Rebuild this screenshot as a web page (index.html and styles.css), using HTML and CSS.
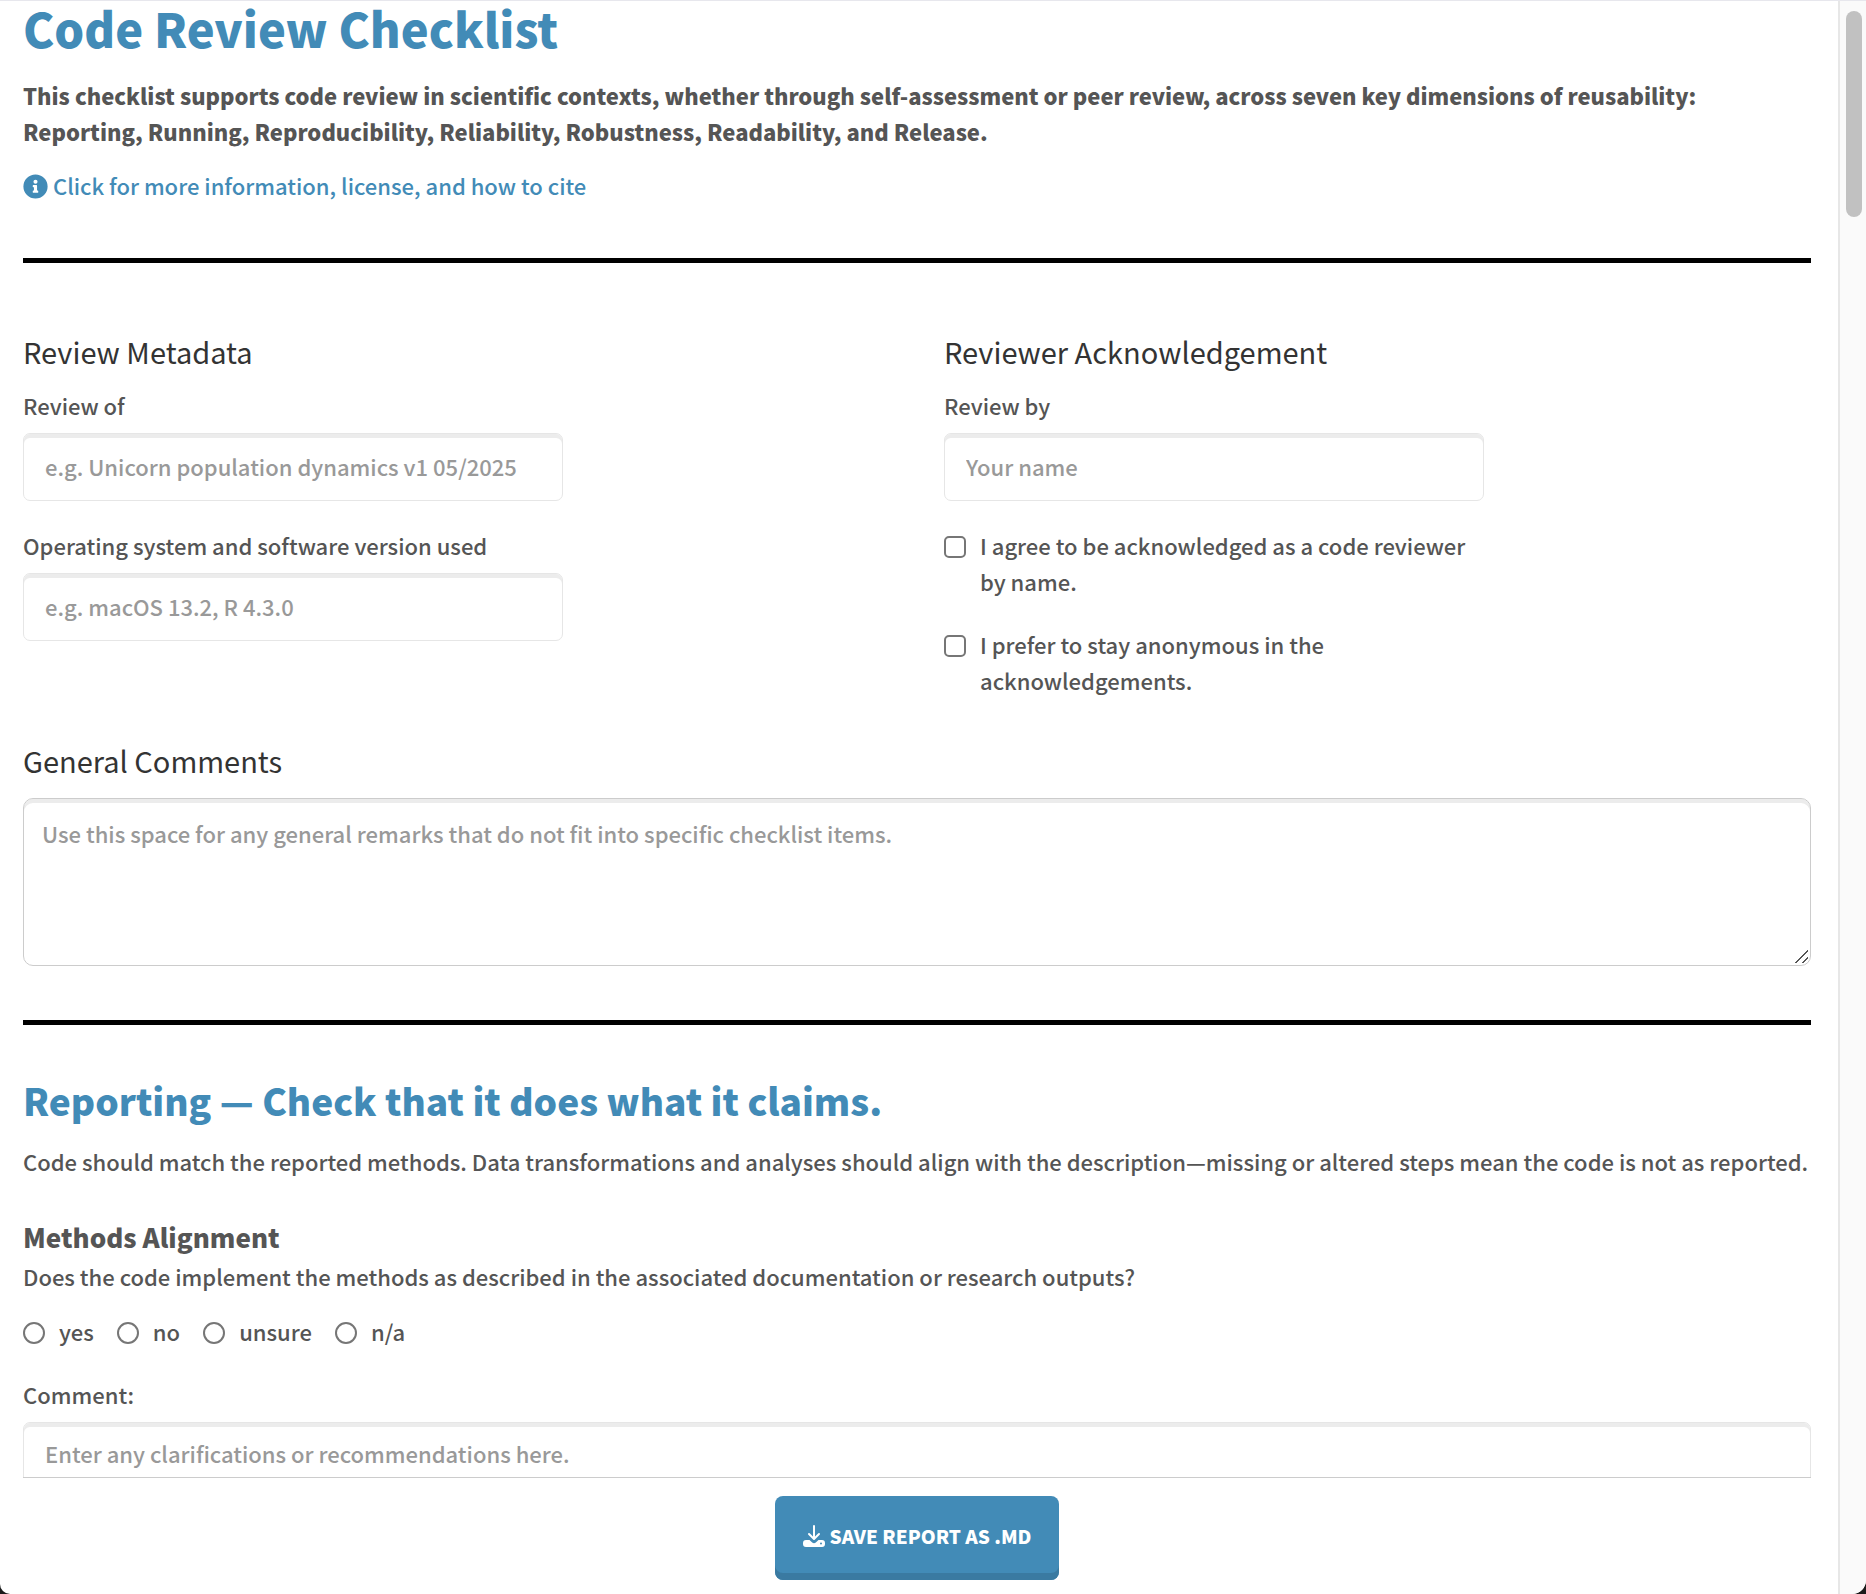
FILE: index.html
```html
<!DOCTYPE html>
<html lang="en">
<head>
<meta charset="utf-8">
<meta name="viewport" content="width=device-width, initial-scale=1">
<title>Code Review Checklist</title>
<link rel="stylesheet" href="styles.css">
</head>
<body>
<div class="window">
  <main class="panel">
    <div class="checklist">
      <header class="intro">
        <h1 class="title">Code Review Checklist</h1>
        <p class="lead">This checklist supports code review in scientific contexts, whether through self-assessment or peer review, across seven key dimensions of reusability: Reporting, Running, Reproducibility, Reliability, Robustness, Readability, and Release.</p>
        <a class="info-link" href="#info"><svg class="info-icon" viewBox="0 0 512 512" aria-hidden="true"><path fill="currentColor" fill-rule="evenodd" d="M256 8a248 248 0 1 0 0 496a248 248 0 1 0 0-496zM256 118a42 42 0 1 1 0 84a42 42 0 1 1 0-84zM312 372c0 7-5 12-12 12h-88c-7 0-12-5-12-12v-24c0-7 5-12 12-12h12v-64h-12c-7 0-12-5-12-12v-24c0-7 5-12 12-12h64c7 0 12 5 12 12v100h12c7 0 12 5 12 12z"/></svg> Click for more information, license, and how to cite</a>
      </header>

      <hr class="rule">

      <div class="details">
        <section class="column">
          <h3 class="subheading">Review Metadata</h3>
          <div class="field">
            <label for="review-of">Review of</label>
            <input class="text-input" id="review-of" type="text" placeholder="e.g. Unicorn population dynamics v1 05/2025">
          </div>
          <div class="field">
            <label for="system">Operating system and software version used</label>
            <input class="text-input" id="system" type="text" placeholder="e.g. macOS 13.2, R 4.3.0">
          </div>
        </section>
        <section class="column">
          <h3 class="subheading">Reviewer Acknowledgement</h3>
          <div class="field">
            <label for="review-by">Review by</label>
            <input class="text-input" id="review-by" type="text" placeholder="Your name">
          </div>
          <label class="check"><input class="tick" type="checkbox"><span>I agree to be acknowledged as a code reviewer by name.</span></label>
          <label class="check"><input class="tick" type="checkbox"><span>I prefer to stay anonymous in the acknowledgements.</span></label>
        </section>
      </div>

      <section class="general">
        <h3 class="subheading"><label for="general">General Comments</label></h3>
        <textarea class="comments" id="general" placeholder="Use this space for any general remarks that do not fit into specific checklist items."></textarea>
      </section>

      <hr class="rule">

      <section class="dimension">
        <h2 class="heading">Reporting — Check that it does what it claims.</h2>
        <p class="summary">Code should match the reported methods. Data transformations and analyses should align with the description—missing or altered steps mean the code is not as reported.</p>
        <h4 class="item-title">Methods Alignment</h4>
        <p class="question">Does the code implement the methods as described in the associated documentation or research outputs?</p>
        <div class="answers" role="radiogroup" aria-label="Methods Alignment">
          <label class="answer"><input class="tick" type="radio" name="methods">yes</label>
          <label class="answer"><input class="tick" type="radio" name="methods">no</label>
          <label class="answer"><input class="tick" type="radio" name="methods">unsure</label>
          <label class="answer"><input class="tick" type="radio" name="methods">n/a</label>
        </div>
        <div class="field">
          <label for="methods-comment">Comment:</label>
          <textarea class="text-input item-comment" id="methods-comment" placeholder="Enter any clarifications or recommendations here."></textarea>
        </div>
      </section>
    </div>

    <footer class="actions">
      <button class="save" type="button"><svg class="save-icon" viewBox="0 0 22 22" aria-hidden="true"><path fill="none" stroke="currentColor" stroke-width="2" stroke-linecap="round" stroke-linejoin="round" d="M11 1v12M6 9l5 5l5-5"/><path fill="currentColor" fill-rule="evenodd" d="M3 15h3.500l2.700 2.400a2.700 2.700 0 0 0 3.600 0L15.500 15H19a3 3 0 0 1 3 3v1a3 3 0 0 1-3 3H3a3 3 0 0 1-3-3v-1a3 3 0 0 1 3-3zM18 17.500a1 1 0 1 0 0 2a1 1 0 1 0 0-2z"/></svg> Save report as .md</button>
    </footer>
  </main>
  <div class="track" aria-hidden="true"><div class="thumb"></div></div>
</div>
</body>
</html>
```

FILE: styles.css
```css
* {
  box-sizing: border-box;
}

body {
  margin: 0;
  background: #1b1b1b;
  color: #555;
  font-family: "Noto Sans CJK SC", "Noto Sans", sans-serif;
  font-size: 22px;
  font-weight: 500;
  line-height: 36px;
}

h1, h2, h3, h4, p {
  margin: 0;
}

h1, h2, h4 {
  font-weight: 900;
}

input, textarea, button {
  font-family: inherit;
  font-weight: inherit;
}

.window {
  display: flex;
  height: 100vh;
  overflow: hidden;
  border-top: 1px solid #e7e7ed;
  border-radius: 0 0 14px 10px;
  background: #fff;
}

.panel {
  display: flex;
  flex: 1;
  flex-direction: column;
  min-width: 0;
  padding: 0 27px 0 23px;
}

.checklist {
  flex: 1;
  min-height: 0;
  overflow: hidden;
  border-bottom: 1px solid #ccc;
}

.title {
  color: #428bb7;
  font-size: 47px;
  line-height: 54px;
}

.lead {
  margin: 22px 0 18px;
  font-weight: 900;
}

.info-link {
  display: block;
  color: #428bb7;
  text-decoration: none;
}

.info-icon {
  width: 25px;
  height: 25px;
  vertical-align: -4px;
}

.rule {
  height: 5px;
  margin: 54px 0;
  border: 0;
  background: #000;
}

.intro {
  margin-bottom: 55px;
}

.details {
  display: grid;
  grid-template-columns: 1fr 1fr;
  gap: 54px;
  margin-top: 70px;
}

.subheading {
  color: #333;
  font-size: 29px;
  font-weight: 400;
  line-height: 36px;
}

.field {
  display: flex;
  flex-direction: column;
  gap: 10px;
}

.column {
  max-width: 540px;
}

.column .field {
  margin: 18px 0 26px;
}

.column .field + .field {
  margin: 26px 0 0;
}

.text-input {
  width: 100%;
  height: 68px;
  padding: 0 21px 2px;
  border: 1px solid #e6e6e6;
  border-radius: 7px;
  outline: 0;
  background: #fff;
  box-shadow: inset 0 4px 0 #ececec;
  color: #555;
  font-size: 22px;
}

::placeholder {
  color: #999;
  opacity: 1;
}

.check {
  display: flex;
  gap: 14px;
}

.check + .check {
  margin-top: 27px;
}

.tick {
  flex: none;
  width: 22px;
  height: 22px;
  margin: 9px 0 0;
  border: 2px solid #767676;
  border-radius: 5px;
  background: #fff;
  appearance: none;
}

.tick[type="radio"] {
  border-radius: 50%;
}

.tick:checked {
  background: #428bb7;
  box-shadow: inset 0 0 0 3px #fff;
}

.general {
  margin-top: 44px;
}

.comments {
  display: block;
  width: 100%;
  height: 168px;
  margin-top: 20px;
  padding: 16px 18px;
  border: 1px solid #ccc;
  border-radius: 10px;
  outline: 0;
  background: #fff;
  box-shadow: inset 0 4px 0 #ececec;
  font-size: 22px;
  line-height: 36px;
  resize: both;
}

.comments::-webkit-resizer {
  background: linear-gradient(135deg, transparent 47%, #555 48%, #555 54%, transparent 55%, transparent 74%, #555 75%, #555 81%, transparent 82%) 0 0 / 13px 13px no-repeat;
}

.heading {
  margin: -3px 0 19px;
  color: #428bb7;
  font-size: 37px;
  line-height: 48px;
}

.item-title {
  margin: 40px 0 3px;
  font-size: 26px;
  line-height: 36px;
}

.answers {
  display: flex;
  gap: 23px;
  margin: 19px 0 27px;
}

.answer {
  display: flex;
  gap: 14px;
}

.item-comment {
  height: 120px;
  padding: 12px 21px;
  line-height: 36px;
}

.actions {
  display: flex;
  justify-content: center;
  padding: 18px 0 14px;
}

.save {
  display: flex;
  align-items: center;
  gap: 5px;
  height: 84px;
  padding: 0 28px 5px;
  border: 0;
  border-radius: 8px;
  background: #428bb7;
  box-shadow: inset 0 -7px 0 #3a7aa1;
  color: #fff;
  font-size: 19px;
  font-weight: 900;
  text-transform: uppercase;
}

.save-icon {
  width: 22px;
  height: 22px;
}

.track {
  width: 28px;
  padding: 10px 4px 0 6px;
  border-left: 2px solid #e7e7e7;
  background: #fafafa;
}

.thumb {
  height: 13%;
  border-radius: 8px;
  background: #c1c1c1;
}
```
